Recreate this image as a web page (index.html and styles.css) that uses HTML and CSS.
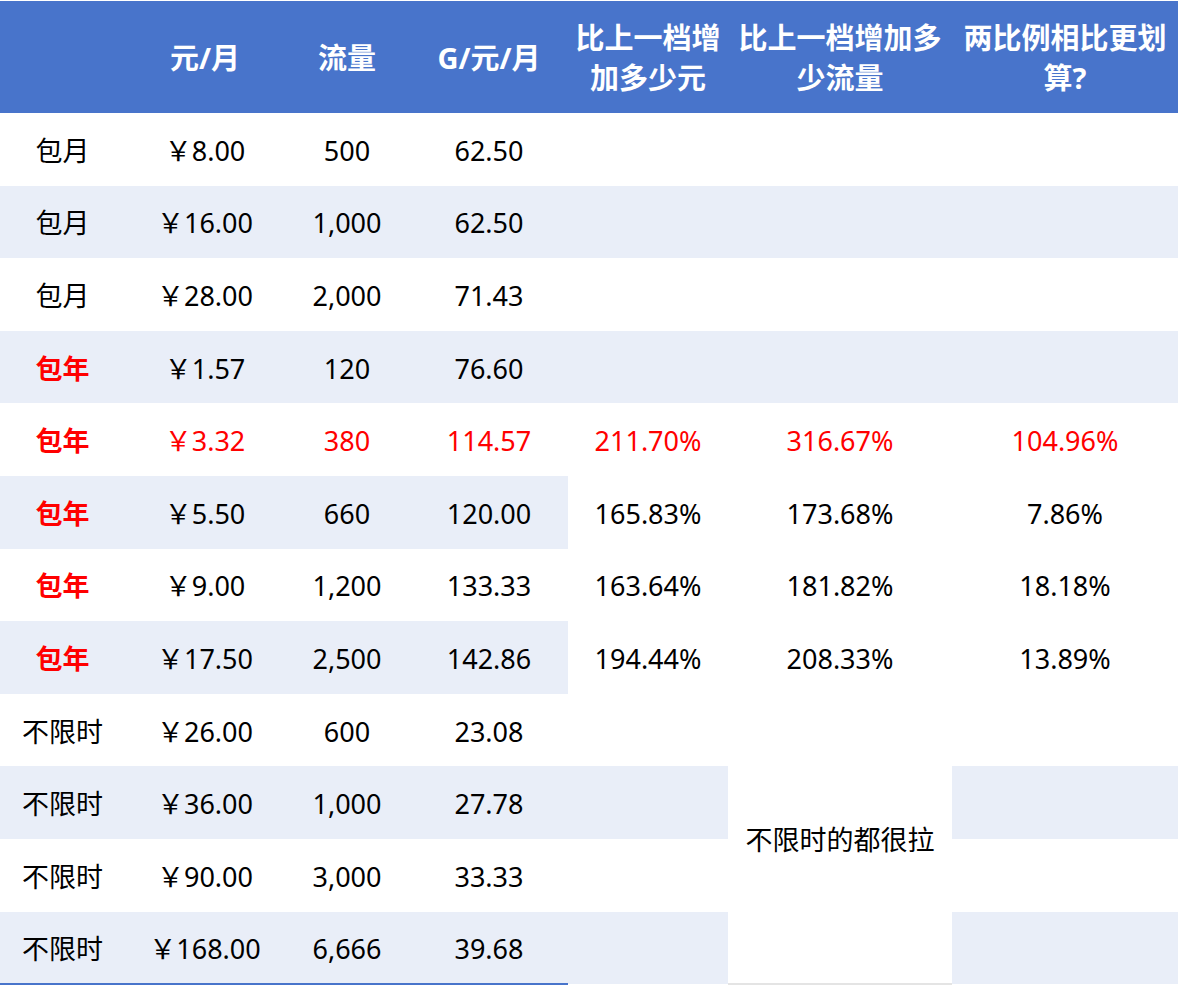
FILE: index.html
```html
<!DOCTYPE html>
<html lang="zh-CN">
<head>
<meta charset="utf-8">
<title>流量套餐对比</title>
<link rel="stylesheet" href="styles.css">
</head>
<body>
<table class="sheet">
  <colgroup>
    <col class="c1"><col class="c2"><col class="c3"><col class="c4"><col class="c5"><col class="c6"><col class="c7">
  </colgroup>
  <thead>
    <tr class="head">
      <th></th>
      <th>元/月</th>
      <th>流量</th>
      <th>G/元/月</th>
      <th>比上一档增<br>加多少元</th>
      <th>比上一档增加多<br>少流量</th>
      <th>两比例相比更划<br>算?</th>
    </tr>
  </thead>
  <tbody>
    <tr><td>包月</td><td>￥8.00</td><td>500</td><td>62.50</td><td></td><td></td><td></td></tr>
    <tr class="band"><td>包月</td><td>￥16.00</td><td>1,000</td><td>62.50</td><td></td><td></td><td></td></tr>
    <tr><td>包月</td><td>￥28.00</td><td>2,000</td><td>71.43</td><td></td><td></td><td></td></tr>
    <tr class="band"><td class="year">包年</td><td>￥1.57</td><td>120</td><td>76.60</td><td></td><td></td><td></td></tr>
    <tr class="hot"><td class="year">包年</td><td>￥3.32</td><td>380</td><td>114.57</td><td>211.70%</td><td>316.67%</td><td>104.96%</td></tr>
    <tr class="band-left"><td class="year">包年</td><td>￥5.50</td><td>660</td><td>120.00</td><td class="plain">165.83%</td><td class="plain">173.68%</td><td class="plain">7.86%</td></tr>
    <tr><td class="year">包年</td><td>￥9.00</td><td>1,200</td><td>133.33</td><td>163.64%</td><td>181.82%</td><td>18.18%</td></tr>
    <tr class="band-left"><td class="year">包年</td><td>￥17.50</td><td>2,500</td><td>142.86</td><td class="plain">194.44%</td><td class="plain">208.33%</td><td class="plain">13.89%</td></tr>
    <tr><td>不限时</td><td>￥26.00</td><td>600</td><td>23.08</td><td></td><td class="merged" rowspan="4">不限时的都很拉</td><td></td></tr>
    <tr class="band"><td>不限时</td><td>￥36.00</td><td>1,000</td><td>27.78</td><td></td><td></td></tr>
    <tr><td>不限时</td><td>￥90.00</td><td>3,000</td><td>33.33</td><td></td><td></td></tr>
    <tr class="band last"><td>不限时</td><td>￥168.00</td><td>6,666</td><td>39.68</td><td></td><td></td></tr>
  </tbody>
</table>
</body>
</html>
```

FILE: styles.css
```css
html, body {
  margin: 0;
  padding: 0;
  background: #ffffff;
}

body {
  font-family: "Noto Sans", "Noto Sans CJK SC", sans-serif;
  color: #000000;
}

.sheet {
  border-collapse: collapse;
  table-layout: fixed;
  width: 1178px;
  margin-top: 1px;
}

.c1 { width: 126px; }
.c2 { width: 158px; }
.c3 { width: 126px; }
.c4 { width: 158px; }
.c5 { width: 160px; }
.c6 { width: 224px; }
.c7 { width: 226px; }

.head {
  height: 112px;
}

.head th {
  padding: 2px 0 0;
  background: #4874cb;
  color: #ffffff;
  font-size: 29px;
  font-weight: 700;
  line-height: 40px;
  text-align: center;
  vertical-align: middle;
  white-space: nowrap;
}

tbody tr {
  height: 72.6px;
}

tbody td {
  padding: 3px 0 0;
  font-size: 27px;
  line-height: 34px;
  text-align: center;
  vertical-align: middle;
  white-space: nowrap;
}

tbody td:first-child {
  padding-right: 1px;
}

.band td {
  background: #e9eef8;
}

.band-left td {
  background: #e9eef8;
}

.band-left td.plain {
  background: #ffffff;
}

.band td.merged,
td.merged {
  background: #ffffff;
}

.year {
  color: #ff0000;
  font-weight: 700;
}

.hot td {
  color: #ff0000;
}

.last td:nth-child(-n+4) {
  border-bottom: 2px solid #4874cb;
}

td.merged {
  border-bottom: 2px solid #e4e4e4;
}
```
